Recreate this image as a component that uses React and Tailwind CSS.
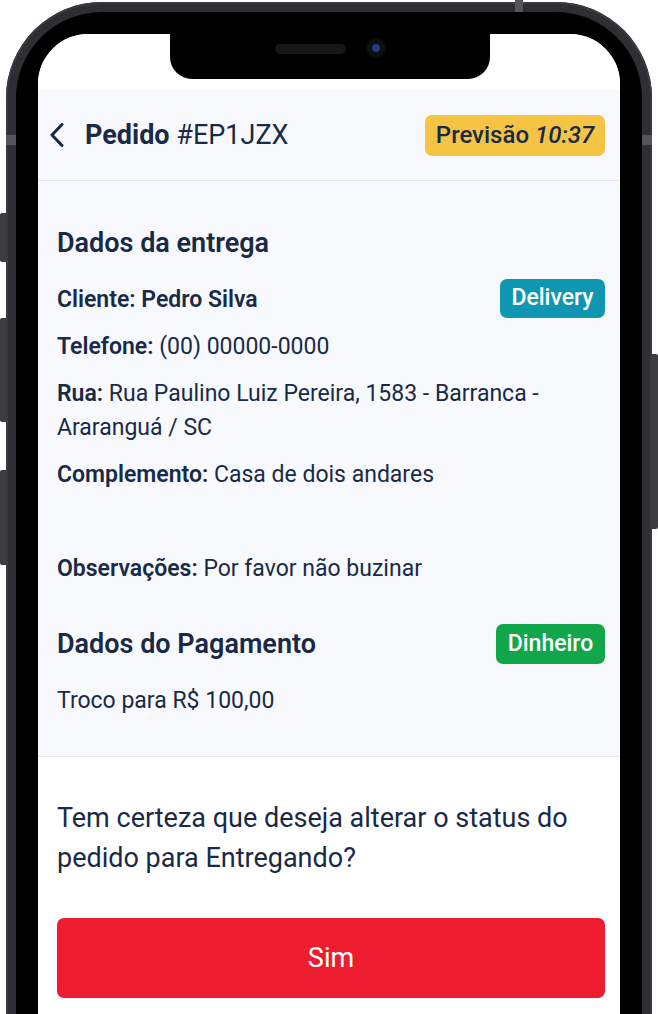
import { useState } from "react";

const ink = "text-[#182a47]";

function Badge({ className, children }) {
  return (
    <span className={"inline-flex items-center justify-center rounded-[7px] text-white text-[23px] font-medium " + className}>
      {children}
    </span>
  );
}

function Row({ label, children }) {
  return (
    <p className="text-[23px] leading-[34px]">
      <span className="font-semibold">{label}</span> {children}
    </p>
  );
}

export default function App() {
  const [order] = useState({
    code: "#EP1JZX",
    eta: "10:37",
    client: "Pedro Silva",
    phone: "(00) 00000-0000",
    street: "Rua Paulino Luiz Pereira, 1583 - Barranca - Araranguá / SC",
    complement: "Casa de dois andares",
    notes: "Por favor não buzinar",
  });

  return (
    <div className="relative h-[1014px] overflow-hidden bg-white font-['Roboto','Liberation_Sans',sans-serif]">
      {/* side buttons */}
      <div className="absolute left-0 top-[213px] h-[49px] w-[7px] rounded-l-[2px] bg-[#3c3c41]" />
      <div className="absolute left-0 top-[318px] h-[104px] w-[7px] rounded-l-[2px] bg-[#3c3c41]" />
      <div className="absolute left-0 top-[470px] h-[95px] w-[7px] rounded-l-[2px] bg-[#3c3c41]" />
      <div className="absolute right-0 top-[354px] h-[175px] w-[7px] rounded-r-[2px] bg-[#3c3c41]" />

      {/* phone frame */}
      <div className="mx-[6px] mt-[2px] h-[1100px] rounded-t-[96px] bg-[#2e2e33] px-[10px] pt-[10px] shadow-[inset_0_0_0_2px_#39393e]">
        <div className="relative h-full rounded-t-[86px] bg-black px-[22px] pt-[22px]">
          {/* notch */}
          <div className="absolute left-[154px] top-[22px] z-10 flex h-[45px] w-[320px] items-start justify-center gap-[20px] rounded-b-[22px] bg-black pt-[10px]">
            <div className="h-[10px] w-[71px] rounded-full bg-[#161618]" />
            <div className="-mt-[6px] flex h-[20px] w-[20px] items-center justify-center rounded-full bg-[#0d0d12]">
              <div className="h-[8px] w-[8px] rounded-full bg-[#1f3f78]" />
            </div>
          </div>

          <div className={"flex h-full flex-col overflow-hidden rounded-t-[50px] bg-white " + ink}>
            <div className="h-[56px] shrink-0 bg-white" />

            {/* header */}
            <div className="flex h-[91px] shrink-0 items-center justify-between border-b border-[#e2e7ef] bg-[#f8f9fd] pl-[12px] pr-[15px]">
              <div className="flex items-center gap-[21px]">
                <svg width="14" height="24" viewBox="0 0 14 24" fill="none">
                  <path d="M12 1.5 L2 12 L12 22.5" stroke="#182a47" strokeWidth="3" strokeLinecap="round" strokeLinejoin="round" />
                </svg>
                <h1 className="text-[27px] leading-[34px]">
                  <span className="font-bold">Pedido</span> {order.code}
                </h1>
              </div>
              <div className="flex h-[41px] w-[180px] items-center justify-center rounded-[7px] bg-[#f6c445] text-[24px] font-medium">
                Previsão&nbsp;<span className="italic">{order.eta}</span>
              </div>
            </div>

            {/* delivery + payment */}
            <div className="shrink-0 bg-[#f8f9fd] pb-[38px] pl-[19px] pr-[15px] pt-[46px]">
              <h2 className="text-[27px] font-semibold leading-[32px]">Dados da entrega</h2>
              <div className="mt-[24px] flex flex-col gap-[13px]">
                <div className="flex items-center justify-between">
                  <p className="text-[23px] font-semibold leading-[34px]">Cliente: {order.client}</p>
                  <Badge className="-mb-[1px] -mt-[5px] h-[39px] w-[105px] bg-[#0f97b2]">Delivery</Badge>
                </div>
                <Row label="Telefone:">{order.phone}</Row>
                <Row label="Rua:">{order.street}</Row>
                <Row label="Complemento:">{order.complement}</Row>
                <div className="h-[34px]" />
                <Row label="Observações:">{order.notes}</Row>
              </div>

              <div className="mt-[38px] flex h-[40px] items-center justify-between">
                <h2 className="text-[27px] font-semibold leading-[32px]">Dados do Pagamento</h2>
                <Badge className="h-[40px] w-[109px] bg-[#12a64a]">Dinheiro</Badge>
              </div>
              <p className="mt-[20px] text-[23px] leading-[34px]">Troco para R$ 100,00</p>
            </div>

            {/* confirm */}
            <div className="flex-1 border-t border-[#e2e7ef] bg-white pl-[19px] pr-[15px] pt-[41px]">
              <p className="text-[27px] leading-[40px]">
                Tem certeza que deseja alterar o status do pedido para Entregando?
              </p>
              <button className="mt-[40px] flex h-[80px] w-full items-center justify-center rounded-[7px] bg-[#ed1c2f] text-[27px] text-white">
                Sim
              </button>
            </div>
          </div>
        </div>
      </div>

      {/* antenna lines */}
      <div className="absolute left-[515px] top-0 h-[12px] w-[8px] bg-[#55555a]" />
      <div className="absolute left-[6px] top-[135px] h-[10px] w-[10px] bg-[#55555a]" />
      <div className="absolute left-[642px] top-[135px] h-[10px] w-[10px] bg-[#55555a]" />
    </div>
  );
}
